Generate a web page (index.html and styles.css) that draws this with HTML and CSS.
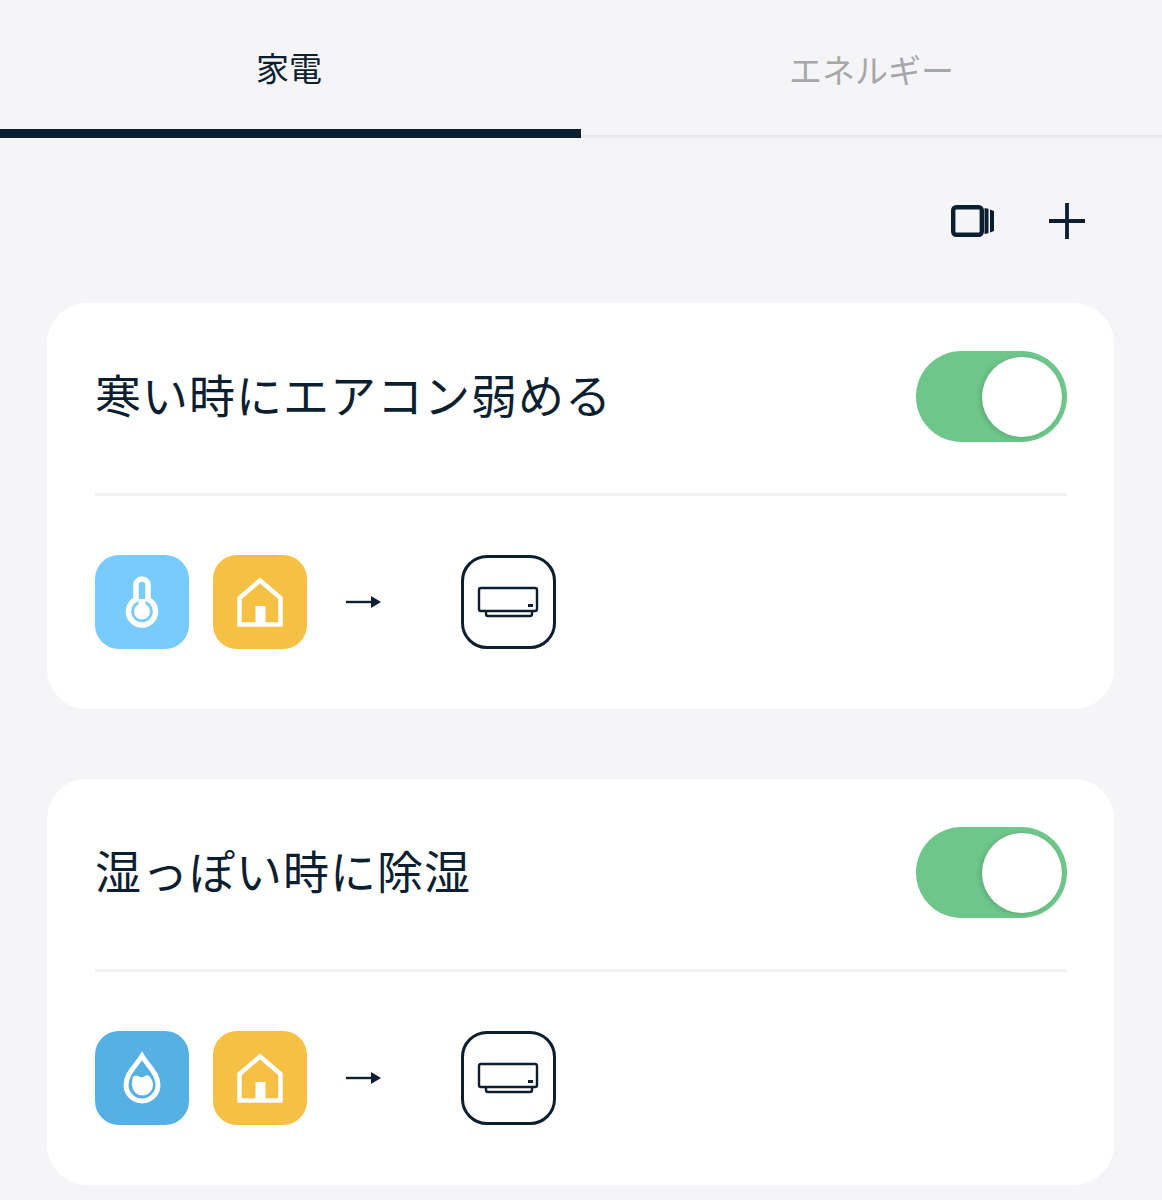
FILE: index.html
```html
<!DOCTYPE html>
<html lang="ja">
<head>
  <meta charset="UTF-8">
  <meta name="viewport" content="width=device-width, initial-scale=1.0">
  <title>家電</title>
  <link rel="stylesheet" href="styles.css">
</head>
<body>
  <!-- Tabs -->
  <div class="tabs">
    <div class="tab active">家電</div>
    <div class="tab">エネルギー</div>
  </div>

  <!-- Toolbar -->
  <div class="toolbar">
    <svg class="tool-cards" viewBox="0 0 44 32" width="44" height="32">
      <rect x="2.200" y="2.200" width="28.600" height="27.600" rx="3" fill="none" stroke="#0c1f30" stroke-width="4.400"/>
      <path d="M33.500 3l4 .8v24.400l-4 .8z" fill="#0c1f30"/>
      <path d="M39 4.500l4 1.500v20l-4 1.500z" fill="#0c1f30"/>
    </svg>
    <svg class="tool-plus" viewBox="0 0 36 36" width="36" height="36">
      <path d="M18 0v36M0 18h36" fill="none" stroke="#0c1f30" stroke-width="3.800"/>
    </svg>
  </div>

  <!-- Card 1 -->
  <div class="card">
    <div class="card-header">
      <h2>寒い時にエアコン弱める</h2>
      <div class="toggle"><span class="knob"></span></div>
    </div>
    <div class="card-rule">
      <div class="tile tile-temp">
        <svg viewBox="0 0 94 94" width="94" height="94">
          <path d="M41 44.400V30a6 6 0 0 1 12 0V44.400a13.500 13.500 0 1 1-12 0z" fill="none" stroke="#fff" stroke-width="5.500"/>
          <path d="M47 44v8" stroke="#fff" stroke-width="7"/>
          <circle cx="47" cy="56.500" r="8" fill="#fff"/>
        </svg>
      </div>
      <div class="tile tile-home">
        <svg viewBox="0 0 94 94" width="94" height="94">
          <path d="M47 25.500L67.500 43v26.500h-41V43z" fill="none" stroke="#fff" stroke-width="4.500"/>
          <path d="M42.500 51h10v18h-10z" fill="#fff"/>
        </svg>
      </div>
      <svg class="arrow" viewBox="0 0 37 14" width="37" height="14">
        <path d="M1 7h26" stroke="#0c1f30" stroke-width="2.400"/>
        <path d="M26 1l10 6-10 6z" fill="#0c1f30"/>
      </svg>
      <div class="tile tile-device">
        <svg viewBox="0 0 94 94" width="94" height="94">
          <rect x="18" y="33" width="58" height="23" rx="2" fill="none" stroke="#0c1f30" stroke-width="2.400"/>
          <path d="M25 56v3a2 2 0 0 0 2 2h42a2 2 0 0 0 2-2v-3" fill="none" stroke="#0c1f30" stroke-width="2.400"/>
          <rect x="67" y="49" width="5" height="3" fill="#0c1f30"/>
        </svg>
      </div>
    </div>
  </div>

  <!-- Card 2 -->
  <div class="card">
    <div class="card-header">
      <h2>湿っぽい時に除湿</h2>
      <div class="toggle"><span class="knob"></span></div>
    </div>
    <div class="card-rule">
      <div class="tile tile-humid">
        <svg viewBox="0 0 94 94" width="94" height="94">
          <path d="M47 25C40 36 31 43 31 54a16 16 0 0 0 32 0C63 43 54 36 47 25z" fill="none" stroke="#fff" stroke-width="5"/>
          <path d="M38 46c3-2 5-1 7 0s5-.500 7-2c3 1 6 5 6 10a10.500 10.500 0 0 1-21 0c0-3 .300-6 1-8z" fill="#fff"/>
        </svg>
      </div>
      <div class="tile tile-home">
        <svg viewBox="0 0 94 94" width="94" height="94">
          <path d="M47 25.500L67.500 43v26.500h-41V43z" fill="none" stroke="#fff" stroke-width="4.500"/>
          <path d="M42.500 51h10v18h-10z" fill="#fff"/>
        </svg>
      </div>
      <svg class="arrow" viewBox="0 0 37 14" width="37" height="14">
        <path d="M1 7h26" stroke="#0c1f30" stroke-width="2.400"/>
        <path d="M26 1l10 6-10 6z" fill="#0c1f30"/>
      </svg>
      <div class="tile tile-device">
        <svg viewBox="0 0 94 94" width="94" height="94">
          <rect x="18" y="33" width="58" height="23" rx="2" fill="none" stroke="#0c1f30" stroke-width="2.400"/>
          <path d="M25 56v3a2 2 0 0 0 2 2h42a2 2 0 0 0 2-2v-3" fill="none" stroke="#0c1f30" stroke-width="2.400"/>
          <rect x="67" y="49" width="5" height="3" fill="#0c1f30"/>
        </svg>
      </div>
    </div>
  </div>
</body>
</html>
```

FILE: styles.css
```css
/* General Styling */
body {
  font-family: "Noto Sans CJK JP", "Noto Sans", sans-serif;
  margin: 0;
  padding: 0;
  background-color: #f5f5f8;
  color: #0c1f30;
}

/* Tabs */
.tabs {
  display: flex;
  height: 138px;
}

.tab {
  flex: 1 1 50%;
  box-sizing: border-box;
  padding-top: 45px;
  text-align: center;
  font-size: 33px;
  line-height: 48px;
  color: #a5a8ab;
  border-bottom: 3px solid #e8e9eb;
}

.tab.active {
  padding-top: 43px;
  text-indent: -3px;
  color: #0c1f30;
  border-bottom: 9px solid #0c1f30;
}

/* Toolbar */
.toolbar {
  display: flex;
  justify-content: flex-end;
  align-items: flex-start;
  gap: 54px;
  height: 165px;
  box-sizing: border-box;
  padding: 65px 77px 0 0;
}

.tool-cards {
  margin-top: 2px;
}

/* Cards */
.card {
  box-sizing: border-box;
  height: 406px;
  margin: 0 48px 70px 47px;
  padding: 48px 47px 60px 48px;
  background: white;
  border-radius: 40px;
}

.card-header {
  display: flex;
  justify-content: space-between;
  align-items: center;
  height: 91px;
  margin-bottom: 51px;
}

.card-header h2 {
  margin: -6px 0 0;
  font-size: 46px;
  font-weight: 400;
  letter-spacing: 1px;
  line-height: 91px;
}

.toggle {
  display: flex;
  justify-content: flex-end;
  align-items: center;
  box-sizing: border-box;
  width: 151px;
  height: 91px;
  padding-right: 5px;
  background: #6ec68a;
  border-radius: 46px;
}

.knob {
  width: 80px;
  height: 80px;
  background: white;
  border-radius: 50%;
  box-shadow: -2px 1px 5px rgba(0, 0, 0, 0.15);
}

.card-rule {
  display: flex;
  align-items: center;
  padding-top: 59px;
  border-top: 3px solid #f0f1f2;
}

/* Icon tiles */
.tile {
  box-sizing: border-box;
  flex: none;
  width: 94px;
  height: 94px;
  margin-right: 24px;
  border-radius: 24px;
}

.tile svg {
  display: block;
}

.tile-temp {
  background: #78cbfd;
}

.tile-humid {
  background: #55b0e4;
}

.tile-home {
  background: #f6c044;
}

.tile-device {
  width: 95px;
  border: 3px solid #0c1f30;
  border-radius: 26px;
}

.tile-device svg {
  margin: -3px;
}

.arrow {
  flex: none;
  margin: 0 79px 0 14px;
}
```
